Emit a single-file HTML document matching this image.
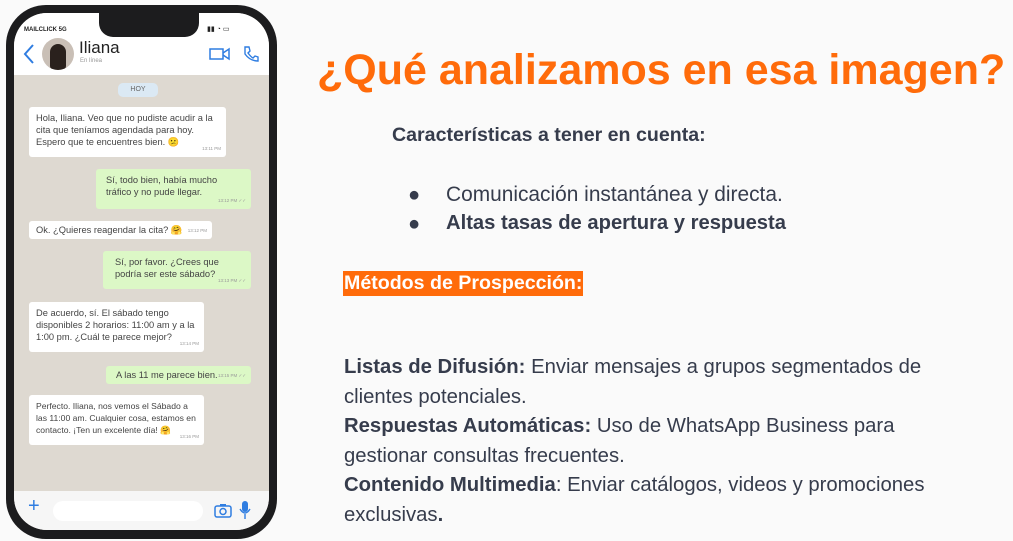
<!DOCTYPE html>
<html><head><meta charset="utf-8"><style>
*{margin:0;padding:0;box-sizing:border-box}
body{width:1013px;height:541px;background:#fafafa;position:relative;overflow:hidden;font-family:"Liberation Sans",sans-serif}
.a{position:absolute}
.phone{left:6px;top:5px;width:271px;height:534px;background:#1c1c1e;border-radius:40px}
.screen{left:14px;top:13px;width:255px;height:517px;background:#ded9d1;border-radius:33px;overflow:hidden}
.hdr{left:0;top:0;width:255px;height:62px;background:#fff}
.bar{left:0;top:478px;width:255px;height:40px;background:#f6f6f6}
.b{position:absolute;background:#fff;border-radius:3px;font-size:9.3px;color:#444;line-height:12px;padding:5px 7px}
.g{background:#dcf8c6}
.t{position:absolute;right:5px;bottom:2px;font-size:4.5px;color:#999}
.txt{color:#363c4c;font-size:20.3px}
</style></head><body>
<div class="a phone"></div>
<div class="a screen">
 <div class="a hdr">
  <div class="a" style="left:10px;top:14px;width:4px;height:4px;font-size:6px;color:#222;font-weight:bold;white-space:nowrap">MAILCLICK 5G</div>
  <div class="a" style="left:85px;top:0;width:100px;height:24px;background:#1c1c1e;border-radius:0 0 14px 14px"></div>
  <div class="a" style="left:193px;top:12px;font-size:7px;color:#222">▮▮ ◔ ▭</div>
  <svg class="a" style="left:8px;top:30px" width="14" height="22"><path d="M11 2 L3 11 L11 20" stroke="#2f7de1" stroke-width="2" fill="none"/></svg>
  <div class="a" style="left:28px;top:25px;width:32px;height:32px;border-radius:50%;background:#c9bfb6;overflow:hidden"><div style="margin:6px auto 0;width:16px;height:26px;background:#2a211d;border-radius:8px 8px 4px 4px"></div></div>
  <div class="a" style="left:65px;top:25px;font-size:17px;color:#222">Iliana</div>
  <div class="a" style="left:66px;top:45px;font-size:6px;color:#999">En línea</div>
  <svg class="a" style="left:195px;top:34px" width="22" height="14"><rect x="1" y="2" width="13" height="10" fill="none" stroke="#2f7de1" stroke-width="1.5"/><path d="M14 6 L20 2 V12 L14 8" fill="none" stroke="#2f7de1" stroke-width="1.5"/></svg>
  <svg class="a" style="left:228px;top:32px" width="18" height="18"><path d="M3 2 L7 2 L8 6 L6 8 Q9 12 11 13 L13 11 L16 12 L16 16 Q8 16 3 9 Z" fill="none" stroke="#2f7de1" stroke-width="1.4"/></svg>
 </div>
 <div class="a" style="left:104px;top:70px;width:40px;height:14px;background:#dbe9f4;border-radius:5px;font-size:7px;color:#666;text-align:center;line-height:14px">HOY</div>
 <div class="b" style="left:15px;top:94px;width:197px;height:50px">Hola, Iliana. Veo que no pudiste acudir a la cita que teníamos agendada para hoy. Espero que te encuentres bien. 😕<span class="t">13:11 PM</span></div>
 <div class="b g" style="left:82px;top:156px;width:155px;height:40px;padding-left:10px">Sí, todo bien, había mucho tráfico y no pude llegar.<span class="t">13:12 PM ✓✓</span></div>
 <div class="b" style="left:15px;top:208px;width:183px;height:18px;padding-top:3px">Ok. ¿Quieres reagendar la cita? 🤗<span class="t">13:12 PM</span></div>
 <div class="b g" style="left:89px;top:238px;width:148px;height:38px;padding-left:12px">Sí, por favor. ¿Crees que podría ser este sábado?<span class="t">13:13 PM ✓✓</span></div>
 <div class="b" style="left:15px;top:289px;width:175px;height:50px">De acuerdo, sí. El sábado tengo disponibles 2 horarios: 11:00 am y a la 1:00 pm. ¿Cuál te parece mejor?<span class="t">13:14 PM</span></div>
 <div class="b g" style="left:92px;top:353px;width:145px;height:18px;padding-top:3px;padding-left:10px">A las 11 me parece bien.<span class="t">13:15 PM ✓✓</span></div>
 <div class="b" style="left:15px;top:382px;width:175px;height:50px;font-size:8.6px">Perfecto. Iliana, nos vemos el Sábado a las 11:00 am. Cualquier cosa, estamos en contacto. ¡Ten un excelente día! 🤗<span class="t">13:16 PM</span></div>
 <div class="a bar">
  <div class="a" style="left:14px;top:4px;font-size:20px;color:#2f7de1;font-weight:300">+</div>
  <div class="a" style="left:39px;top:10px;width:150px;height:20px;background:#fff;border-radius:10px"></div>
  <svg class="a" style="left:200px;top:12px" width="18" height="15"><rect x="1" y="3" width="16" height="11" rx="2" fill="none" stroke="#2f7de1" stroke-width="1.5"/><circle cx="9" cy="8.5" r="3" fill="none" stroke="#2f7de1" stroke-width="1.5"/><rect x="6" y="1" width="6" height="2" fill="#2f7de1"/></svg>
  <svg class="a" style="left:224px;top:9px" width="14" height="20"><rect x="4" y="1" width="6" height="11" rx="3" fill="#2f7de1"/><path d="M2 9 Q7 17 12 9 M7 14 V19" stroke="#2f7de1" stroke-width="1.4" fill="none"/></svg>
 </div>
</div>
<div class="a" style="left:317px;top:46px;font-size:43px;font-weight:bold;color:#ff6b0a;white-space:nowrap;letter-spacing:0">¿Qué analizamos en esa imagen?</div>
<div class="a txt" style="left:392px;top:124px;font-weight:bold;font-size:19.6px">Características a tener en cuenta:</div>
<div class="a txt" style="left:408px;top:184px">●</div>
<div class="a txt" style="left:446px;top:183px;font-size:20.9px">Comunicación instantánea y directa.</div>
<div class="a txt" style="left:408px;top:213px">●</div>
<div class="a txt" style="left:446px;top:212px;font-weight:bold;font-size:20.2px">Altas tasas de apertura y respuesta</div>
<div class="a" style="left:343px;top:271px;height:25px;padding:0 1px;background:#ff6b0a;color:#fff;font-weight:bold;font-size:19.6px;line-height:25px">Métodos de Prospección:</div>
<div class="a txt" style="left:344px;top:353px;width:585px;line-height:29.5px">
<b>Listas de Difusión:</b> Enviar mensajes a grupos segmentados de clientes potenciales.<br>
<b>Respuestas Automáticas:</b> Uso de WhatsApp Business para gestionar consultas frecuentes.<br>
<b>Contenido Multimedia</b>: Enviar catálogos, videos y promociones exclusivas<b>.</b></div>
</body></html>
